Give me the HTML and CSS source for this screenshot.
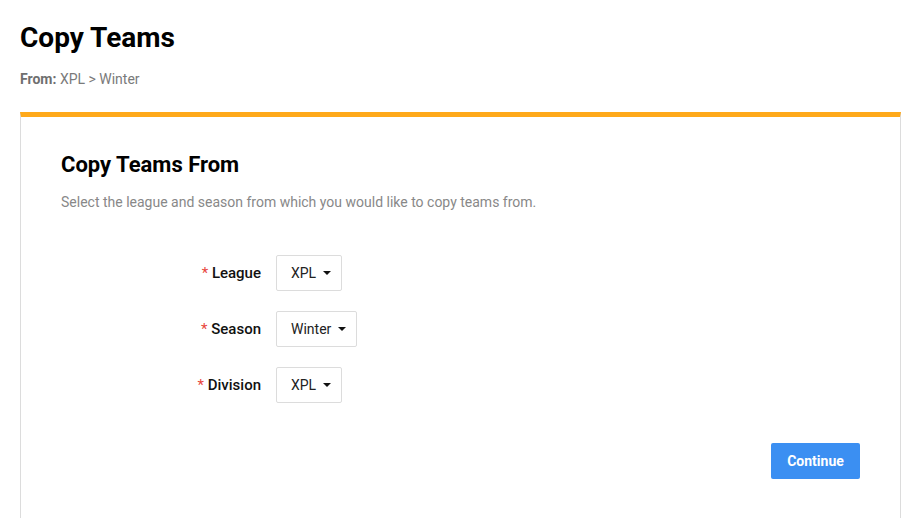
FILE: index.html
```html
<!DOCTYPE html>
<html>
<head>
<meta charset="utf-8">
<link rel="stylesheet" href="styles.css">
</head>
<body>
<div class="page">
  <h1 class="title">Copy Teams</h1>
  <div class="crumb"><b>From:</b> XPL &gt; Winter</div>
  <div class="card">
    <h2 class="card-title">Copy Teams From</h2>
    <p class="desc">Select the league and season from which you would like to copy teams from.</p>
    <div class="form">
      <div class="row">
        <label class="label"><span class="req">*</span> League</label>
        <div class="select">XPL <span class="caret"></span></div>
      </div>
      <div class="row">
        <label class="label"><span class="req">*</span> Season</label>
        <div class="select">Winter <span class="caret"></span></div>
      </div>
      <div class="row">
        <label class="label"><span class="req">*</span> Division</label>
        <div class="select">XPL <span class="caret"></span></div>
      </div>
    </div>
    <div class="actions">
      <button class="btn">Continue</button>
    </div>
  </div>
</div>
</body>
</html>
```
FILE: styles.css
```css
html, body {
  margin: 0;
  padding: 0;
  background: #fff;
  font-family: Roboto, "Liberation Sans", sans-serif;
  color: #111;
}
.page {
  padding: 20px 20px 0 20px;
}
.title {
  margin: 0;
  font-size: 28px;
  font-weight: 700;
  line-height: 36px;
  color: #000;
}
.crumb {
  margin-top: 14px;
  font-size: 14px;
  line-height: 18px;
  color: #7a7a7a;
}
.crumb b {
  color: #6f6f6f;
}
.card {
  margin-top: 24px;
  border: 1px solid #dcdcdc;
  border-top: 5px solid #ffa91a;
  padding: 34px 40px 60px 40px;
  height: 400px;
}
.card-title {
  margin: 0;
  font-size: 22px;
  font-weight: 700;
  line-height: 28px;
  color: #000;
}
.desc {
  margin: 13px 0 0 0;
  font-size: 14px;
  line-height: 20px;
  color: #888;
}
.form {
  margin-top: 43px;
  display: flex;
  flex-direction: column;
  gap: 20px;
}
.row {
  display: flex;
  align-items: center;
}
.label {
  width: 200px;
  text-align: right;
  font-size: 15px;
  font-weight: 500;
  color: #111;
  padding-right: 15px;
}
.req {
  color: #e8453c;
  font-weight: 400;
}
.select {
  height: 36px;
  box-sizing: border-box;
  border: 1px solid #dcdcdc;
  border-radius: 2px;
  padding: 0 10px 0 14px;
  display: flex;
  align-items: center;
  font-size: 14px;
  color: #222;
}
.caret {
  display: inline-block;
  margin-left: 7px;
  width: 0;
  height: 0;
  border-left: 4px solid transparent;
  border-right: 4px solid transparent;
  border-top: 4px solid #111;
}
.actions {
  margin-top: 40px;
  display: flex;
  justify-content: flex-end;
}
.btn {
  width: 89px;
  height: 36px;
  background: #3b8ff2;
  color: #fff;
  border: none;
  border-radius: 2px;
  font-family: Roboto, "Liberation Sans", sans-serif;
  font-size: 14px;
  font-weight: 700;
}
```
